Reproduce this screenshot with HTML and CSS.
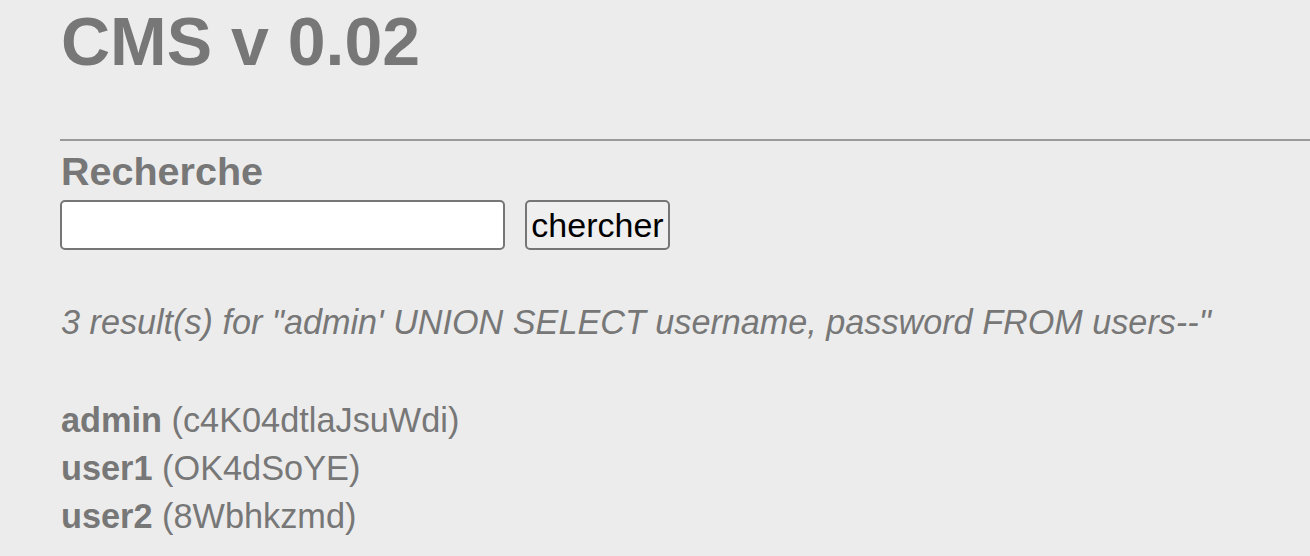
FILE: index.html
```html
<!DOCTYPE html>
<html>
<head>
<meta charset="utf-8">
<title>CMS v 0.02</title>
<link rel="stylesheet" href="styles.css">
</head>
<body>
<div class="page">
  <h1 class="title">CMS v 0.02</h1>
  <hr class="rule">
  <h2 class="section">Recherche</h2>
  <form class="search">
    <input class="search-input" type="text" name="q">
    <button class="search-btn" type="submit">chercher</button>
  </form>
  <p class="summary">3 result(s) for "admin' UNION SELECT username, password FROM users--"</p>
  <div class="results">
    <div class="row"><b>admin</b> (c4K04dtlaJsuWdi)</div>
    <div class="row"><b>user1</b> (OK4dSoYE)</div>
    <div class="row"><b>user2</b> (8Wbhkzmd)</div>
  </div>
</div>
</body>
</html>
```

FILE: styles.css
```css
html, body {
  margin: 0;
  padding: 0;
  background: #ececec;
}
body {
  font-family: "Liberation Sans", Arial, sans-serif;
  color: #777777;
  overflow: hidden;
}
.page {
  padding-left: 60px;
}
.title {
  margin: 0;
  padding: 2px 0 0 1px;
  font-size: 68px;
  line-height: 78px;
  font-weight: bold;
}
.rule {
  margin: 59px 0 0 0;
  border: 0;
  border-top: 2px solid #9a9a9a;
  height: 0;
}
.section {
  margin: 8px 0 0 0;
  padding-left: 1px;
  font-size: 39.5px;
  line-height: 45px;
  font-weight: bold;
}
.search {
  display: flex;
  gap: 20px;
  margin: 6px 0 0 0;
  height: 50px;
}
.search-input {
  box-sizing: border-box;
  width: 445px;
  height: 50px;
  border: 2px solid #767676;
  border-radius: 5px;
  background: #ffffff;
  margin: 0;
  padding: 2px 4px;
  font-family: "Liberation Sans", Arial, sans-serif;
  font-size: 32px;
}
.search-btn {
  box-sizing: border-box;
  width: 145px;
  height: 50px;
  border: 2px solid #767676;
  border-radius: 5px;
  background: #efefef;
  color: #000000;
  margin: 0;
  padding: 0;
  font-family: "Liberation Sans", Arial, sans-serif;
  font-size: 34px;
}
.summary {
  margin: 52px 0 0 0;
  padding-left: 1px;
  font-style: italic;
  font-size: 34.2px;
  line-height: 40px;
}
.results {
  margin-top: 54px;
  padding-left: 1px;
  font-size: 34.3px;
  line-height: 48px;
}
```
